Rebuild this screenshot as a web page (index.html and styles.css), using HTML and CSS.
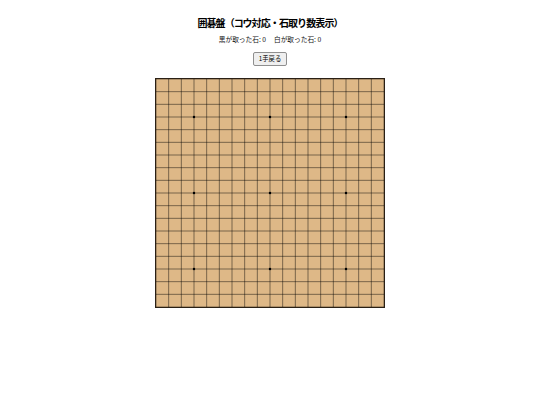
FILE: index.html
```html
<!DOCTYPE html>
<html lang="ja">
<head>
<meta charset="utf-8">
<title>囲碁盤</title>
<link rel="stylesheet" href="styles.css">
</head>
<body>
<main class="page">
  <h1 class="title">囲碁盤（コウ対応・石取り数表示）</h1>
  <p class="score"><span>黒が取った石: 0</span><span>白が取った石: 0</span></p>
  <button class="undo" type="button">1手戻る</button>
  <div class="board">
    <svg class="grid" width="228" height="228" viewBox="0 0 540 540" xmlns="http://www.w3.org/2000/svg">
      <g stroke="#000" stroke-width="1.1">
        <line x1="0" y1="0" x2="540" y2="0"/><line x1="0" y1="30" x2="540" y2="30"/><line x1="0" y1="60" x2="540" y2="60"/><line x1="0" y1="90" x2="540" y2="90"/><line x1="0" y1="120" x2="540" y2="120"/><line x1="0" y1="150" x2="540" y2="150"/><line x1="0" y1="180" x2="540" y2="180"/><line x1="0" y1="210" x2="540" y2="210"/><line x1="0" y1="240" x2="540" y2="240"/><line x1="0" y1="270" x2="540" y2="270"/><line x1="0" y1="300" x2="540" y2="300"/><line x1="0" y1="330" x2="540" y2="330"/><line x1="0" y1="360" x2="540" y2="360"/><line x1="0" y1="390" x2="540" y2="390"/><line x1="0" y1="420" x2="540" y2="420"/><line x1="0" y1="450" x2="540" y2="450"/><line x1="0" y1="480" x2="540" y2="480"/><line x1="0" y1="510" x2="540" y2="510"/><line x1="0" y1="540" x2="540" y2="540"/>
        <line y1="0" x1="0" y2="540" x2="0"/><line y1="0" x1="30" y2="540" x2="30"/><line y1="0" x1="60" y2="540" x2="60"/><line y1="0" x1="90" y2="540" x2="90"/><line y1="0" x1="120" y2="540" x2="120"/><line y1="0" x1="150" y2="540" x2="150"/><line y1="0" x1="180" y2="540" x2="180"/><line y1="0" x1="210" y2="540" x2="210"/><line y1="0" x1="240" y2="540" x2="240"/><line y1="0" x1="270" y2="540" x2="270"/><line y1="0" x1="300" y2="540" x2="300"/><line y1="0" x1="330" y2="540" x2="330"/><line y1="0" x1="360" y2="540" x2="360"/><line y1="0" x1="390" y2="540" x2="390"/><line y1="0" x1="420" y2="540" x2="420"/><line y1="0" x1="450" y2="540" x2="450"/><line y1="0" x1="480" y2="540" x2="480"/><line y1="0" x1="510" y2="540" x2="510"/><line y1="0" x1="540" y2="540" x2="540"/>
      </g>
      <g fill="#000">
        <circle cx="90" cy="90" r="3"/><circle cx="270" cy="90" r="3"/><circle cx="450" cy="90" r="3"/>
        <circle cx="90" cy="270" r="3"/><circle cx="270" cy="270" r="3"/><circle cx="450" cy="270" r="3"/>
        <circle cx="90" cy="450" r="3"/><circle cx="270" cy="450" r="3"/><circle cx="450" cy="450" r="3"/>
      </g>
    </svg>
  </div>
</main>
</body>
</html>
```

FILE: styles.css
```css
html, body {
  margin: 0;
  padding: 0;
  background: #fff;
}

body {
  font-family: "Noto Sans CJK JP", "Noto Sans", sans-serif;
  color: #000;
}

.page {
  display: flex;
  flex-direction: column;
  align-items: center;
  padding-top: 16px;
}

.title {
  margin: 0;
  font-size: 10px;
  line-height: 14px;
  font-weight: 700;
  letter-spacing: -0.9px;
}

.score {
  margin: 4px 0 0;
  font-size: 6.7px;
  line-height: 10px;
  display: flex;
  gap: 8px;
  color: #111;
}

.undo {
  margin-top: 8px;
  width: 34px;
  height: 14px;
  padding: 0;
  font-family: inherit;
  font-size: 6.3px;
  line-height: 12px;
  color: #000;
  background: #efefef;
  border: 1px solid #8f8f8f;
  border-radius: 2px;
}

.board {
  margin-top: 12px;
  width: 228px;
  height: 228px;
  border: 1px solid #2a2015;
  background: #deb887;
}

.grid {
  display: block;
}
```
